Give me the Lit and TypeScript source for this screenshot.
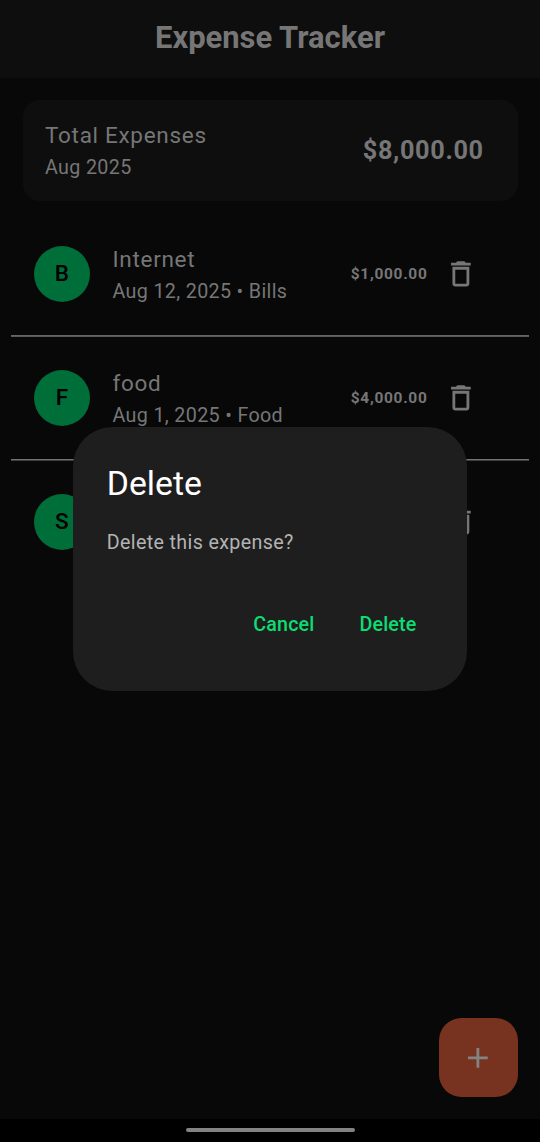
import { LitElement, html, css, nothing } from "lit";
import { customElement, property } from "lit/decorators.js";

interface Expense {
  initial: string;
  title?: string;
  sub?: string;
  amount?: string;
}

const EXPENSES: Expense[] = [
  { initial: "B", title: "Internet", sub: "Aug 12, 2025 • Bills", amount: "$1,000.00" },
  { initial: "F", title: "food", sub: "Aug 1, 2025 • Food", amount: "$4,000.00" },
  { initial: "S" },
];

@customElement("expense-row")
export class ExpenseRow extends LitElement {
  @property({ attribute: false }) expense!: Expense;

  static styles = css`
    :host {
      display: flex;
      align-items: center;
      box-sizing: border-box;
      height: 121.75px;
      padding: 0 33.75px 0 22.5px;
    }
    .avatar {
      flex: none;
      display: flex;
      align-items: center;
      justify-content: center;
      width: 56.25px;
      height: 56.25px;
      border-radius: 50%;
      background: #006e38;
      color: #000;
      font-size: 22.5px;
      font-weight: 500;
      line-height: 33.75px;
    }
    .avatar span {
      margin-top: -0.3px;
    }
    .text {
      flex: 1;
      min-width: 0;
      margin-left: 22.5px;
      padding-top: 0.8px;
      white-space: nowrap;
    }
    .title {
      font-size: 22.5px;
      line-height: 33.75px;
      letter-spacing: 0.7px;
    }
    .sub {
      padding-top: 1.2px;
      font-size: 19.69px;
      line-height: 28.13px;
      letter-spacing: 0.35px;
    }
    .amount {
      font-size: 15.47px;
      font-weight: 700;
      letter-spacing: 0.7px;
    }
    .trash {
      display: flex;
      align-items: center;
      justify-content: center;
      width: 67.5px;
      height: 67.5px;
    }
    svg {
      display: block;
      width: 33.75px;
      height: 33.75px;
      fill: currentColor;
    }
  `;

  render() {
    const e = this.expense;
    return html`
      <div class="avatar"><span>${e.initial}</span></div>
      <div class="text">
        ${e.title ? html`<div class="title">${e.title}</div>` : nothing}
        ${e.sub ? html`<div class="sub">${e.sub}</div>` : nothing}
      </div>
      ${e.amount ? html`<div class="amount">${e.amount}</div>` : nothing}
      <div class="trash">
        <svg viewBox="0 0 24 24">
          <path
            d="M6 19c0 1.1.9 2 2 2h8c1.1 0 2-.9 2-2V7H6v12zM8 9h8v10H8V9zm7.500-5l-1-1h-5l-1 1H5v2h14V4h-3.500z"
          />
        </svg>
      </div>
    `;
  }
}

@customElement("app-root")
export class AppRoot extends LitElement {
  static styles = css`
    :host {
      display: block;
      font-family: Roboto, sans-serif;
      color: #767676;
    }
    .screen {
      position: relative;
      display: flex;
      flex-direction: column;
      width: 540px;
      height: 1142px;
      overflow: hidden;
      background: #080808;
    }
    .header {
      flex: none;
      height: 77.5px;
      box-sizing: border-box;
      padding-bottom: 2px;
      display: flex;
      align-items: center;
      justify-content: center;
      background: #0e0e0e;
      font-size: 30.94px;
      font-weight: 700;
    }
    .total {
      flex: none;
      display: flex;
      align-items: center;
      justify-content: space-between;
      box-sizing: border-box;
      height: 101.25px;
      margin: 22.25px 22.5px 12.3px;
      padding: 0 33.75px 0 22.5px;
      border-radius: 16.9px;
      background: #0e0e0e;
    }
    .total-label {
      font-size: 22.5px;
      line-height: 33.75px;
      letter-spacing: 0.7px;
    }
    .total-month {
      padding-top: 1px;
      font-size: 19.69px;
      line-height: 28.13px;
      letter-spacing: 0.35px;
    }
    .total-amount {
      font-size: 25.31px;
      font-weight: 700;
      letter-spacing: 0.65px;
    }
    .list {
      flex: 1;
      padding: 0 11.25px;
    }
    .divider {
      height: 2px;
      background: linear-gradient(#656565 50%, #5a5a5a 50%);
    }
    .divider.last {
      background: linear-gradient(#727272 50%, #404040 50%);
    }
    .navbar {
      flex: none;
      display: flex;
      align-items: center;
      justify-content: center;
      box-sizing: border-box;
      height: 23px;
      padding-bottom: 1px;
      background: #000;
    }
    .handle {
      width: 169px;
      height: 4px;
      border-radius: 2px;
      background: #828282;
    }
    .fab {
      position: absolute;
      right: 22.5px;
      bottom: 45px;
      display: flex;
      align-items: center;
      justify-content: center;
      width: 78.75px;
      height: 78.75px;
      border-radius: 22.5px;
      background: #783220;
      color: #838383;
    }
    .fab svg {
      width: 33.75px;
      height: 33.75px;
      fill: currentColor;
    }
    .dialog {
      position: absolute;
      left: 73px;
      top: 427px;
      box-sizing: border-box;
      width: 394px;
      height: 264px;
      padding: 33.75px;
      border-radius: 39.4px;
      background: #1e1e1e;
    }
    .dialog-title {
      font-size: 33.75px;
      line-height: 45px;
      color: #fff;
    }
    .dialog-body {
      margin-top: 23.5px;
      font-size: 19.69px;
      line-height: 28.13px;
      letter-spacing: 0.35px;
      color: #b3b3b3;
    }
    .actions {
      display: flex;
      justify-content: flex-end;
      gap: 45px;
      margin-top: 53.5px;
      padding-right: 16.9px;
      font-size: 19.69px;
      line-height: 28.13px;
      font-weight: 500;
      letter-spacing: 0.14px;
      color: #0ddc72;
    }
  `;

  render() {
    return html`
      <div class="screen">
        <div class="header">Expense Tracker</div>
        <div class="total">
          <div>
            <div class="total-label">Total Expenses</div>
            <div class="total-month">Aug 2025</div>
          </div>
          <div class="total-amount">$8,000.00</div>
        </div>
        <div class="list">
          ${EXPENSES.map(
            (e, i) => html`
              ${i > 0
                ? html`<div class="divider ${i === EXPENSES.length - 1 ? "last" : ""}"></div>`
                : nothing}
              <expense-row .expense=${e}></expense-row>
            `,
          )}
        </div>
        <div class="navbar"><div class="handle"></div></div>
        <div class="fab">
          <svg viewBox="0 0 24 24"><path d="M19 13h-6v6h-2v-6H5v-2h6V5h2v6h6v2z" /></svg>
        </div>
        <div class="dialog" role="dialog">
          <div class="dialog-title">Delete</div>
          <div class="dialog-body">Delete this expense?</div>
          <div class="actions"><span>Cancel</span><span>Delete</span></div>
        </div>
      </div>
    `;
  }
}
